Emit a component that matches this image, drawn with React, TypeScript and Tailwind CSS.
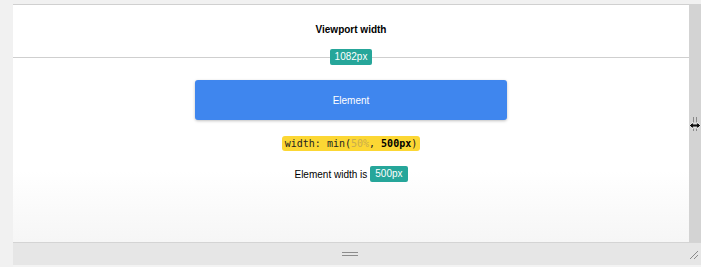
import React from 'react';

const Badge: React.FC<{ children: React.ReactNode }> = ({ children }) => (
    <span className="inline-flex items-center h-[16px] px-[5px] rounded-[2px] bg-[#26a69a] text-white text-[10px] leading-none">
        {children}
    </span>
);

const App: React.FC = () => {
    return (
        <div
            className="w-[701px] h-[267px] overflow-hidden bg-[#f1f1f1] flex flex-col pl-[13px] pt-[4px]"
            style={{ fontFamily: '"Liberation Sans", Arial, sans-serif' }}
        >
            <div className="flex h-[238px]">
                {/* viewport */}
                <div className="flex-1 flex flex-col items-center border-t border-[#d0d0d0] bg-gradient-to-b from-white from-70% to-[#f6f6f6]">
                    <div className="h-[44px] flex items-center justify-center text-[10px] font-bold text-black pt-[4px]">
                        Viewport width
                    </div>
                    <div className="w-full flex items-center">
                        <div className="flex-1 h-px bg-[#cfcfcf]" />
                        <Badge>1082px</Badge>
                        <div className="flex-1 h-px bg-[#cfcfcf]" />
                    </div>
                    <div className="mt-[15px] w-[312px] h-[40px] rounded-[3px] bg-[#3f86ee] shadow-[0_1px_3px_rgba(0,0,0,0.25)] flex items-center justify-center text-white text-[10px]">
                        Element
                    </div>
                    <div
                        className="mt-[16px] h-[15px] px-[3px] rounded-[3px] bg-[#fcd734] flex items-center text-[10px] text-[#222] whitespace-pre"
                        style={{ fontFamily: '"DejaVu Sans Mono", "Liberation Mono", monospace' }}
                    >
                        <span>
                            width: min(<span className="text-[#c9ad4e]">50%</span>{', '}<span className="font-bold text-black">500px</span>)
                        </span>
                    </div>
                    <div className="mt-[15px] flex items-center gap-[3px] text-[10px] text-black">
                        <span>Element width is</span>
                        <Badge>500px</Badge>
                    </div>
                </div>
                {/* right resize strip */}
                <div className="relative w-[12px] bg-[#d3d3d3] flex flex-col items-center pt-[113px]">
                    <div className="flex gap-[2px]">
                        <div className="w-px h-[14px] bg-[#8a8a8a]" />
                        <div className="w-px h-[14px] bg-[#8a8a8a]" />
                    </div>
                    {/* resize cursor */}
                    <svg width="12" height="9" viewBox="0 0 12 9" className="absolute left-[0px] top-[117px]">
                        <path d="M0.5 4.5 L4 1 V3 H8 V1 L11.5 4.5 L8 8 V6 H4 V8 Z" fill="#111" stroke="#fff" strokeWidth="0.8" />
                    </svg>
                </div>
            </div>
            {/* bottom resize bar */}
            <div className="h-[23px] bg-[#e6e6e6] border-t border-[#d4d4d4] flex items-center">
                <div className="flex-1 flex flex-col items-center gap-[2px]">
                    <div className="w-[16px] h-px bg-[#8c8c8c]" />
                    <div className="w-[16px] h-px bg-[#8c8c8c]" />
                </div>
                <svg width="12" height="12" viewBox="0 0 12 12" className="mr-[2px]">
                    <path d="M11 3 L3 11 M11 7 L7 11" stroke="#8a8a8a" strokeWidth="1" />
                </svg>
            </div>
            <div className="flex-1 bg-[#f3f3f3]" />
        </div>
    );
};

export default App;
